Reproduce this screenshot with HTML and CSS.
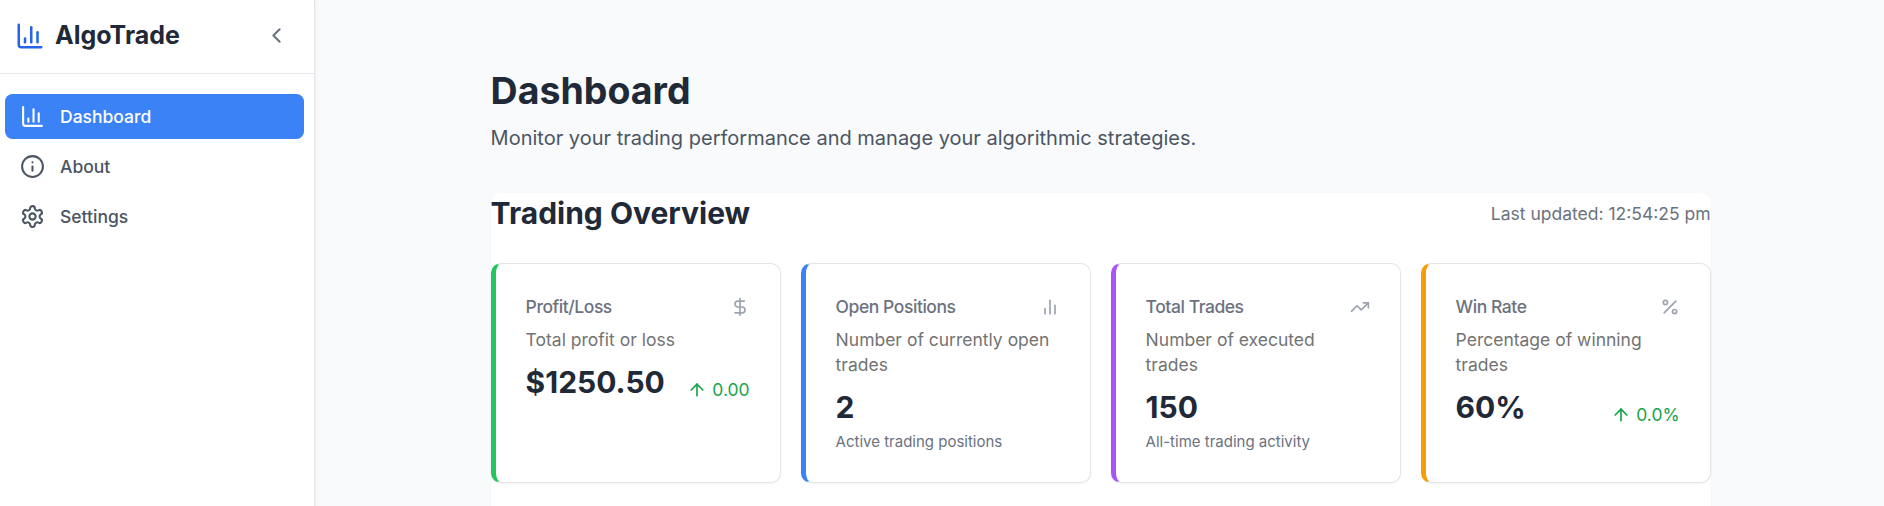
FILE: index.html
```html
<!DOCTYPE html>
<html lang="en">
<head>
<meta charset="utf-8">
<title>AlgoTrade</title>
<link rel="stylesheet" href="styles.css">
</head>
<body>
<div class="app">
  <aside class="sidebar">
    <div class="sidebar-head">
      <svg class="icon logo" viewBox="0 0 24 24"><path d="M3 3v16a2 2 0 0 0 2 2h16"/><path d="M18 17V9"/><path d="M13 17V5"/><path d="M8 17v-3"/></svg>
      <span class="brand">AlgoTrade</span>
      <svg class="icon collapse" viewBox="0 0 24 24"><path d="m15 18-6-6 6-6"/></svg>
    </div>
    <nav class="nav">
      <a class="nav-item active"><svg class="icon" viewBox="0 0 24 24"><path d="M3 3v16a2 2 0 0 0 2 2h16"/><path d="M18 17V9"/><path d="M13 17V5"/><path d="M8 17v-3"/></svg>Dashboard</a>
      <a class="nav-item"><svg class="icon" viewBox="0 0 24 24"><circle cx="12" cy="12" r="10"/><path d="M12 16v-4"/><path d="M12 8h.01"/></svg>About</a>
      <a class="nav-item"><svg class="icon" viewBox="0 0 24 24"><path d="M12.22 2h-.44a2 2 0 0 0-2 2v.18a2 2 0 0 1-1 1.73l-.43.25a2 2 0 0 1-2 0l-.15-.08a2 2 0 0 0-2.73.73l-.22.38a2 2 0 0 0 .73 2.73l.15.1a2 2 0 0 1 1 1.72v.51a2 2 0 0 1-1 1.74l-.15.09a2 2 0 0 0-.73 2.73l.22.38a2 2 0 0 0 2.73.73l.15-.08a2 2 0 0 1 2 0l.43.25a2 2 0 0 1 1 1.73V20a2 2 0 0 0 2 2h.44a2 2 0 0 0 2-2v-.18a2 2 0 0 1 1-1.73l.43-.25a2 2 0 0 1 2 0l.15.08a2 2 0 0 0 2.73-.73l.22-.39a2 2 0 0 0-.73-2.73l-.15-.08a2 2 0 0 1-1-1.74v-.5a2 2 0 0 1 1-1.74l.15-.09a2 2 0 0 0 .73-2.73l-.22-.38a2 2 0 0 0-2.73-.73l-.15.08a2 2 0 0 1-2 0l-.43-.25a2 2 0 0 1-1-1.73V4a2 2 0 0 0-2-2z"/><circle cx="12" cy="12" r="3"/></svg>Settings</a>
    </nav>
  </aside>
  <main class="main">
    <h1 class="title">Dashboard</h1>
    <p class="subtitle">Monitor your trading performance and manage your algorithmic strategies.</p>
    <section class="panel">
      <div class="panel-head">
        <h2 class="panel-title">Trading Overview</h2>
        <span class="updated">Last updated: 12:54:25 pm</span>
      </div>
      <div class="cards">
        <article class="card green">
          <div class="card-head"><h3 class="card-title">Profit/Loss</h3><svg class="icon small" viewBox="0 0 24 24"><path d="M12 2v20"/><path d="M17 5H9.500a3.500 3.500 0 0 0 0 7h5a3.500 3.500 0 0 1 0 7H6"/></svg></div>
          <p class="desc">Total profit or loss</p>
          <div class="value-row"><span class="value">$1250.50</span><span class="change"><svg class="icon" viewBox="0 0 24 24"><path d="m5 12 7-7 7 7"/><path d="M12 19V5"/></svg>0.00</span></div>
        </article>
        <article class="card blue">
          <div class="card-head"><h3 class="card-title">Open Positions</h3><svg class="icon small" viewBox="0 0 24 24"><path d="M18 20V10"/><path d="M12 20V4"/><path d="M6 20v-6"/></svg></div>
          <p class="desc">Number of currently open trades</p>
          <div class="value-row"><span class="value">2</span></div>
          <p class="note">Active trading positions</p>
        </article>
        <article class="card purple">
          <div class="card-head"><h3 class="card-title">Total Trades</h3><svg class="icon small" viewBox="0 0 24 24"><path d="m22 7-8.500 8.500-5-5L2 17"/><path d="M16 7h6v6"/></svg></div>
          <p class="desc">Number of executed trades</p>
          <div class="value-row"><span class="value">150</span></div>
          <p class="note">All-time trading activity</p>
        </article>
        <article class="card amber">
          <div class="card-head"><h3 class="card-title">Win Rate</h3><svg class="icon small" viewBox="0 0 24 24"><path d="M19 5 5 19"/><circle cx="6.500" cy="6.500" r="2.500"/><circle cx="17.500" cy="17.500" r="2.500"/></svg></div>
          <p class="desc">Percentage of winning trades</p>
          <div class="value-row"><span class="value">60%</span><span class="change"><svg class="icon" viewBox="0 0 24 24"><path d="m5 12 7-7 7 7"/><path d="M12 19V5"/></svg>0.0%</span></div>
        </article>
      </div>
    </section>
  </main>
</div>
</body>
</html>
```
FILE: styles.css
```css
* { box-sizing: border-box; margin: 0; }
html, body { height: 100%; overflow: hidden; }
body { font-family: Inter, sans-serif; color: #1f2937; background: #f9fafb; }
.app { display: flex; height: 100vh; }
.icon { width: 25px; height: 25px; flex: none; fill: none; stroke: currentColor; stroke-width: 2; stroke-linecap: round; stroke-linejoin: round; }
.sidebar { width: 315px; flex: none; background: #fff; border-right: 1px solid #e5e7eb; box-shadow: 0 1px 3px rgba(0,0,0,.1); }
.sidebar-head { display: flex; align-items: center; height: 74px; padding: 0 25px 2px 15px; border-bottom: 1px solid #e5e7eb; }
.logo { width: 30px; height: 30px; color: #2563eb; }
.brand { margin-left: 10px; font-size: 25px; line-height: 35px; font-weight: 700; }
.collapse { margin-left: auto; color: #6b7280; }
.nav { display: flex; flex-direction: column; gap: 5px; padding: 20px 10px 0 5px; }
.nav-item { display: flex; align-items: center; gap: 15px; height: 45px; padding: 0 15px; border-radius: 7.5px; font-size: 17.5px; font-weight: 500; color: #4b5563; }
.nav-item.active { background: #3b82f6; color: #fff; }
.main { display: flex; flex-direction: column; flex: 1; padding: 68px 173.4px 0 175.6px; }
.title { font-size: 37.5px; line-height: 45px; font-weight: 700; }
.subtitle { margin-top: 8px; font-size: 20px; line-height: 35px; color: #4b5563; }
.panel { flex: 1; margin-top: 37px; background: #fff; border-radius: 10px 10px 0 0; box-shadow: 0 1px 2px rgba(0,0,0,.05); }
.panel-head { display: flex; justify-content: space-between; align-items: center; margin-bottom: 30px; }
.panel-title { font-size: 30px; line-height: 40px; font-weight: 700; }
.updated { font-size: 17.5px; line-height: 25px; color: #6b7280; }
.cards { display: grid; grid-template-columns: repeat(4, 1fr); gap: 20px; }
.card { height: 220px; padding: 30px; background: #fff; border: 1px solid #e5e5e5; border-left-width: 5px; border-radius: 10px; box-shadow: 0 1px 2px rgba(0,0,0,.05); }
.green { border-left-color: #22c55e; }
.blue { border-left-color: #3b82f6; }
.purple { border-left-color: #a855f7; }
.amber { border-left-color: #f59e0b; }
.card-head { display: flex; justify-content: space-between; align-items: center; height: 25px; }
.card-title { font-size: 17.5px; line-height: 25px; font-weight: 500; letter-spacing: -0.025em; color: #6b7280; }
.small { width: 20px; height: 20px; color: #9ca3af; }
.desc { margin-top: 8px; font-size: 17.5px; line-height: 25px; color: #737373; }
.value-row { display: flex; justify-content: space-between; align-items: flex-end; height: 40px; margin-top: 10px; }
.value { font-size: 30px; line-height: 40px; font-weight: 700; }
.change { display: flex; align-items: center; gap: 5px; font-size: 17.5px; line-height: 25px; color: #16a34a; }
.change .icon { width: 20px; height: 20px; }
.note { margin-top: 5px; font-size: 15px; line-height: 20px; color: #6b7280; }
```
